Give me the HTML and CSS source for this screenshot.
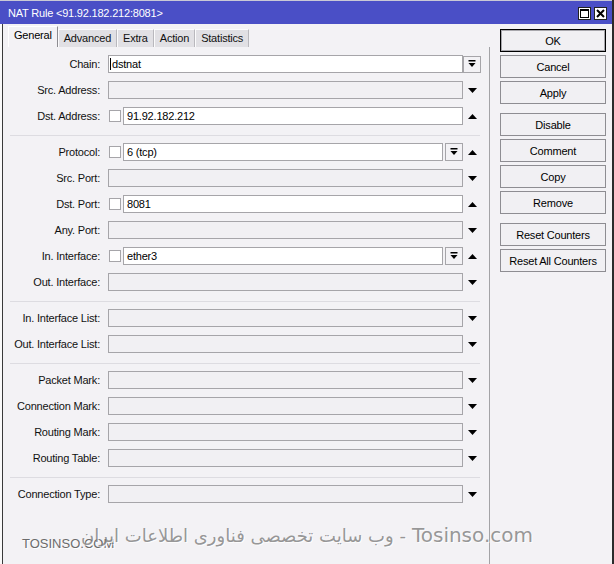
FILE: index.html
```html
<!DOCTYPE html>
<html>
<head>
<meta charset="utf-8">
<link rel="stylesheet" href="styles.css">
</head>
<body>
<div class="window">
  <div class="titlebar">
    <span class="title">NAT Rule &lt;91.92.182.212:8081&gt;</span>
    <div class="tbtns">
      <span class="tbtn"><svg width="11" height="11" viewBox="0 0 11 11"><rect x="1.5" y="1.5" width="8" height="8" fill="none" stroke="#000" stroke-width="1"/><rect x="1.5" y="1.5" width="8" height="1.5" fill="#000"/></svg></span>
      <span class="tbtn"><svg width="11" height="11" viewBox="0 0 11 11"><path d="M2 2 L9 9 M9 2 L2 9" stroke="#000" stroke-width="2"/></svg></span>
    </div>
  </div>
  <div class="frame">
    <div class="left">
      <div class="tabs">
        <span class="tab active">General</span>
        <span class="tab">Advanced</span>
        <span class="tab">Extra</span>
        <span class="tab">Action</span>
        <span class="tab">Statistics</span>
      </div>
      <div class="panel">
        <div class="group">
          <div class="row"><label>Chain:</label><div class="ctl"><div class="field white"><span class="caret"></span>dstnat</div></div><div class="arr"><span class="dd"><svg width="8" height="8" viewBox="0 0 8 8"><rect x="0.5" y="0" width="7" height="1.5" fill="#000"/><path d="M0.5 3 H7.5 L4 7 Z" fill="#000"/></svg></span></div></div>
          <div class="row"><label>Src. Address:</label><div class="ctl"><div class="field"></div></div><div class="arr"><svg class="tri" width="9" height="5" viewBox="0 0 9 5"><path d="M0 0 H9 L4.5 5 Z"/></svg></div></div>
          <div class="row"><label>Dst. Address:</label><div class="ctl"><span class="cb"></span><div class="field white">91.92.182.212</div></div><div class="arr"><svg class="tri" width="9" height="5" viewBox="0 0 9 5"><path d="M0 5 H9 L4.5 0 Z"/></svg></div></div>
        </div>
        <hr class="sep">
        <div class="group">
          <div class="row"><label>Protocol:</label><div class="ctl"><span class="cb"></span><div class="field white">6 (tcp)</div><span class="dd in"><svg width="8" height="8" viewBox="0 0 8 8"><rect x="0.5" y="0" width="7" height="1.5" fill="#000"/><path d="M0.5 3 H7.5 L4 7 Z" fill="#000"/></svg></span></div><div class="arr"><svg class="tri" width="9" height="5" viewBox="0 0 9 5"><path d="M0 5 H9 L4.5 0 Z"/></svg></div></div>
          <div class="row"><label>Src. Port:</label><div class="ctl"><div class="field"></div></div><div class="arr"><svg class="tri" width="9" height="5" viewBox="0 0 9 5"><path d="M0 0 H9 L4.5 5 Z"/></svg></div></div>
          <div class="row"><label>Dst. Port:</label><div class="ctl"><span class="cb"></span><div class="field white">8081</div></div><div class="arr"><svg class="tri" width="9" height="5" viewBox="0 0 9 5"><path d="M0 5 H9 L4.5 0 Z"/></svg></div></div>
          <div class="row"><label>Any. Port:</label><div class="ctl"><div class="field"></div></div><div class="arr"><svg class="tri" width="9" height="5" viewBox="0 0 9 5"><path d="M0 0 H9 L4.5 5 Z"/></svg></div></div>
          <div class="row"><label>In. Interface:</label><div class="ctl"><span class="cb"></span><div class="field white">ether3</div><span class="dd in"><svg width="8" height="8" viewBox="0 0 8 8"><rect x="0.5" y="0" width="7" height="1.5" fill="#000"/><path d="M0.5 3 H7.5 L4 7 Z" fill="#000"/></svg></span></div><div class="arr"><svg class="tri" width="9" height="5" viewBox="0 0 9 5"><path d="M0 5 H9 L4.5 0 Z"/></svg></div></div>
          <div class="row"><label>Out. Interface:</label><div class="ctl"><div class="field"></div></div><div class="arr"><svg class="tri" width="9" height="5" viewBox="0 0 9 5"><path d="M0 0 H9 L4.5 5 Z"/></svg></div></div>
        </div>
        <hr class="sep">
        <div class="group">
          <div class="row"><label>In. Interface List:</label><div class="ctl"><div class="field"></div></div><div class="arr"><svg class="tri" width="9" height="5" viewBox="0 0 9 5"><path d="M0 0 H9 L4.5 5 Z"/></svg></div></div>
          <div class="row"><label>Out. Interface List:</label><div class="ctl"><div class="field"></div></div><div class="arr"><svg class="tri" width="9" height="5" viewBox="0 0 9 5"><path d="M0 0 H9 L4.5 5 Z"/></svg></div></div>
        </div>
        <hr class="sep">
        <div class="group">
          <div class="row"><label>Packet Mark:</label><div class="ctl"><div class="field"></div></div><div class="arr"><svg class="tri" width="9" height="5" viewBox="0 0 9 5"><path d="M0 0 H9 L4.5 5 Z"/></svg></div></div>
          <div class="row"><label>Connection Mark:</label><div class="ctl"><div class="field"></div></div><div class="arr"><svg class="tri" width="9" height="5" viewBox="0 0 9 5"><path d="M0 0 H9 L4.5 5 Z"/></svg></div></div>
          <div class="row"><label>Routing Mark:</label><div class="ctl"><div class="field"></div></div><div class="arr"><svg class="tri" width="9" height="5" viewBox="0 0 9 5"><path d="M0 0 H9 L4.5 5 Z"/></svg></div></div>
          <div class="row"><label>Routing Table:</label><div class="ctl"><div class="field"></div></div><div class="arr"><svg class="tri" width="9" height="5" viewBox="0 0 9 5"><path d="M0 0 H9 L4.5 5 Z"/></svg></div></div>
        </div>
        <hr class="sep">
        <div class="group">
          <div class="row"><label>Connection Type:</label><div class="ctl"><div class="field"></div></div><div class="arr"><svg class="tri" width="9" height="5" viewBox="0 0 9 5"><path d="M0 0 H9 L4.5 5 Z"/></svg></div></div>
        </div>
      </div>
    </div>
    <div class="right">
      <div class="bgroup">
        <span class="btn default">OK</span>
        <span class="btn">Cancel</span>
        <span class="btn">Apply</span>
      </div>
      <div class="bgroup">
        <span class="btn">Disable</span>
        <span class="btn">Comment</span>
        <span class="btn">Copy</span>
        <span class="btn">Remove</span>
      </div>
      <div class="bgroup">
        <span class="btn">Reset Counters</span>
        <span class="btn">Reset All Counters</span>
      </div>
    </div>
  </div>
  <div class="wm-small">TOSINSO.COM</div>
  <div class="wm-big" dir="rtl"><span class="wm-latin">Tosinso.com</span> <span class="wm-fa">- وب سایت تخصصی فناوری اطلاعات ایران</span></div>
</div>
</body>
</html>
```

FILE: styles.css
```css
html, body {
  margin: 0;
  padding: 0;
  background: #fafafa;
}
body {
  font-family: "Liberation Sans", Arial, "DejaVu Sans", sans-serif;
  font-size: 11px;
  letter-spacing: -0.2px;
  color: #000;
}
.window {
  position: relative;
  width: 612px;
  height: 564px;
  border-right: 2px solid #2b2b2b;
  display: flex;
  flex-direction: column;
  overflow: hidden;
}
.titlebar {
  height: 23px;
  border-top: 1px solid #c9c9d6;
  background: #4a4fc6;
  display: flex;
  align-items: center;
  justify-content: space-between;
  padding: 0 5px 0 8px;
  flex: none;
}
.title {
  color: #fff;
  font-size: 11px;
}
.tbtns {
  display: flex;
  gap: 3px;
  margin-top: 1px;
}
.tbtn {
  width: 13px;
  height: 13px;
  box-sizing: border-box;
  background: #fff;
  border: 1px solid #222;
  display: flex;
  align-items: center;
  justify-content: center;
}
.tbtn svg { display: block; }
.frame {
  flex: 1;
  margin-left: 2px;
  border-left: 1px solid #3a3a3a;
  background: #f3f2f5;
  display: flex;
}
.left {
  width: 487px;
  display: flex;
  flex-direction: column;
}
.tabs {
  height: 21px;
  padding: 2px 0 0 5px;
  display: flex;
  align-items: flex-end;
}
.tab {
  height: 18px;
  box-sizing: border-box;
  padding: 0 5px;
  line-height: 17px;
  background: #e1e0e4;
  border-left: 1px solid #fbfbfc;
  border-top: 1px solid #fbfbfc;
  border-right: 1px solid #b9b8bd;
  color: #111;
}
.tab.active {
  height: 21px;
  line-height: 17px;
  background: #f3f2f5;
  border-left: 1px solid #fff;
  border-top: 1px solid #fff;
  border-right: 1px solid #8d8c91;
  padding: 0 5px;
  color: #000;
}
.panel {
  flex: 1;
  border-right: 1px solid #a3a3a6;
  padding-top: 8px;
}
.group {
  display: flex;
  flex-direction: column;
  gap: 8px;
}
.sep {
  border: 0;
  height: 1px;
  background: #dddce1;
  margin: 10px 9px 7px 7px;
}
.row {
  display: flex;
  align-items: center;
  height: 18px;
}
.row label {
  width: 97px;
  flex: none;
  text-align: right;
  margin-right: 8px;
  line-height: 18px;
  white-space: nowrap;
  color: #111;
}
.ctl {
  width: 355px;
  height: 18px;
  display: flex;
  align-items: center;
  flex: none;
}
.field {
  flex: 1;
  height: 18px;
  box-sizing: border-box;
  border: 1px solid #a6a5a9;
  background: #f1f0f3;
  line-height: 16px;
  padding: 0 3px;
  white-space: nowrap;
  display: flex;
  align-items: center;
}
.field.white {
  background: #fff;
}
.caret {
  display: inline-block;
  width: 1px;
  height: 12px;
  background: #000;
  margin-left: -2px;
  margin-right: 1px;
}
.cb {
  width: 12px;
  height: 12px;
  box-sizing: border-box;
  border: 1px solid #a6a5a9;
  background: #fff;
  margin: 0 2px 0 1px;
  flex: none;
}
.dd {
  width: 18px;
  height: 17px;
  box-sizing: border-box;
  border: 1px solid #a6a5a9;
  background: #f3f2f5;
  display: flex;
  align-items: center;
  justify-content: center;
  flex: none;
}
.dd.in {
  height: 18px;
  margin-left: 2px;
}
.dd svg { display: block; }
.arr {
  width: 19px;
  height: 18px;
  display: flex;
  align-items: center;
  justify-content: center;
  flex: none;
}
.arr .dd {
  margin-right: 1px;
}
.tri {
  display: block;
  fill: #000;
}
.right {
  flex: 1;
  padding: 5px 0 0 10px;
  display: flex;
  flex-direction: column;
  gap: 9px;
}
.bgroup {
  display: flex;
  flex-direction: column;
  gap: 3px;
}
.btn {
  width: 106px;
  height: 23px;
  box-sizing: border-box;
  border: 1px solid #8e8d92;
  background: #f1f0f3;
  display: flex;
  align-items: center;
  justify-content: center;
  color: #000;
}
.btn.default {
  border: 1px solid #000;
  box-shadow: inset 0 0 0 1px #a8a7ac;
}
.wm-small {
  position: absolute;
  left: 22px;
  top: 536px;
  font-size: 13px;
  letter-spacing: 0;
  color: #6b6b6b;
  text-shadow: 1px 1px 0 #fff;
}
.wm-big {
  position: absolute;
  right: 79px;
  top: 523px;
  font-family: "DejaVu Sans", sans-serif;
  letter-spacing: 0;
  color: rgba(125, 125, 125, 0.8);
  text-shadow: 1px 1px 0 rgba(255, 255, 255, 0.8);
  white-space: nowrap;
  display: flex;
  align-items: baseline;
  gap: 6px;
}
.wm-latin {
  font-size: 20px;
}
.wm-fa {
  font-size: 18px;
}
```
